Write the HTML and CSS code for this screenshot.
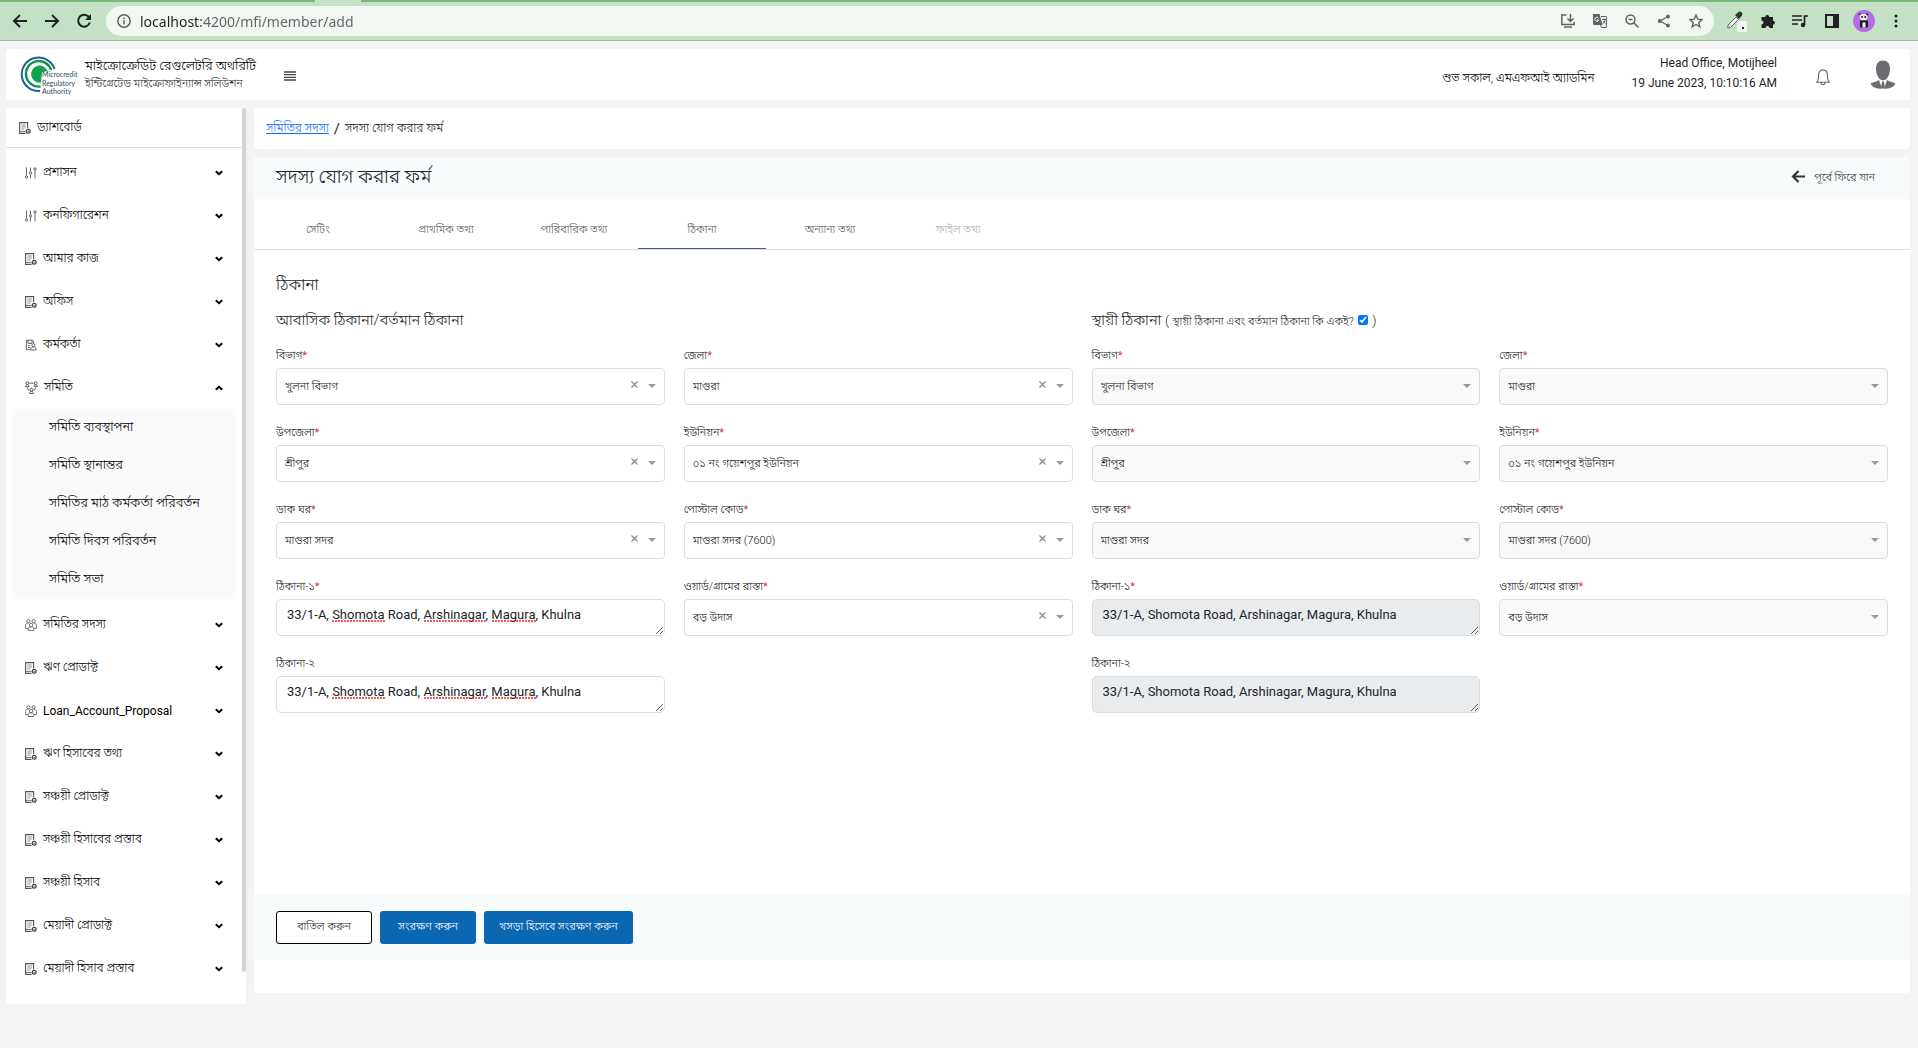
FILE: index.html
```html
<!DOCTYPE html>
<html lang="bn">
<head>
    <meta charset="UTF-8">
    <meta name="viewport" content="width=device-width, initial-scale=1.0">
    <title>সদস্য যোগ করার ফর্ম</title>
    <link rel="stylesheet" href="styles.css">
</head>
<body>
    <!-- icons used more than once -->
    <svg class="sprite" aria-hidden="true">
        <symbol id="i-doc" viewBox="0 0 12 12">
            <path d="M6.500 11.400H.6V.6h8v5.600" fill="none" stroke="#555" stroke-width="1.100"/>
            <path d="M2.400 3h4.400M2.400 5h4.400M2.400 7h3" fill="none" stroke="#777" stroke-width=".8"/>
            <path d="M.6 9.400h6" fill="none" stroke="#555" stroke-width=".8"/>
            <circle cx="9.200" cy="9.300" r="1.900" fill="#fff" stroke="#444" stroke-width="1.200"/>
            <circle cx="9.200" cy="9.300" r=".6" fill="#333"/>
        </symbol>
        <symbol id="i-sliders" viewBox="0 0 12 12">
            <g fill="none" stroke="#555" stroke-width=".9">
                <path d="M1.500 .5v8M5.500 .5v4M5.500 7.500v4M10 3.500v8"/>
                <circle cx="1.500" cy="10" r="1.200"/><circle cx="5.500" cy="6" r="1.200"/><circle cx="10" cy="2" r="1.200"/>
            </g>
        </symbol>
        <symbol id="i-officer" viewBox="0 0 12 12">
            <g fill="none" stroke="#555" stroke-width=".9">
                <path d="M5 10.600H1.400V1.200h6.200l1 1.200v2M3 1.400v3h4v-3M3 6.600h2.200M3 8.500h2"/>
                <circle cx="8.400" cy="6.200" r="1.500"/><path d="M5.800 11V9.600c0-1.200.9-1.700 2.600-1.700s2.700.5 2.700 1.700V11z"/>
            </g>
        </symbol>
        <symbol id="i-network" viewBox="0 0 13 13">
            <g fill="none" stroke="#555" stroke-width=".9">
                <circle cx="2.300" cy="2.200" r="1.400"/><circle cx="10.700" cy="2.200" r="1.400"/><circle cx="6.500" cy="8.800" r="1.500"/>
                <path d="M.6 5.600c0-1.200.7-1.900 1.700-1.900S4 4.400 4 5.600zM9 5.600c0-1.200.7-1.900 1.700-1.900s1.700.7 1.700 1.900zM4.600 12.500c0-1.500.7-2.200 1.900-2.200s1.900.7 1.900 2.200zM4.300 2.200h4.400M2 6.400l2 3.200M11 6.400l-2 3.200"/>
            </g>
        </symbol>
        <symbol id="i-people" viewBox="0 0 12 12">
            <g fill="none" stroke="#666" stroke-width=".9">
                <circle cx="3.400" cy="2.200" r="1.600"/><circle cx="8.600" cy="2.200" r="1.600"/><circle cx="6" cy="6" r="1.700"/>
                <path d="M3 9.600H.6V6.500C.6 5 1.500 4.200 3.600 4.200M9 9.600h2.400V6.500c0-1.500-.9-2.300-3-2.300M3.200 11.500V9.700c0-1.300 1-1.900 2.800-1.900s2.800.6 2.800 1.900v1.800z"/>
            </g>
        </symbol>
        <symbol id="i-chevron" viewBox="0 0 8 6">
            <path d="M.8 1.200L4 4.200l3.200-3" fill="none" stroke="#000" stroke-width="2"/>
        </symbol>
        <symbol id="i-caret" viewBox="0 0 8 4"><path d="M0 0h8L4 4z" fill="#999"/></symbol>
        <symbol id="i-clear" viewBox="0 0 7 7"><path d="M.5.500l6 6M6.500.500l-6 6" stroke="#888" stroke-width="1.200"/></symbol>
        <symbol id="i-spell" viewBox="0 0 205 2">
            <path d="M0 1h53M92 1h63M160 1h45" fill="none" stroke="#f22" stroke-width="1.500" stroke-dasharray="2 1"/>
        </symbol>
    </svg>

    <div class="browser-bar">
        <button class="bar-btn" aria-label="Back"><svg width="16" height="16" viewBox="0 0 16 16"><path d="M15 8H2M8 2L2 8l6 6" fill="none" stroke="#202124" stroke-width="2"/></svg></button>
        <button class="bar-btn" aria-label="Forward"><svg width="16" height="16" viewBox="0 0 16 16"><path d="M1 8h13M8 2l6 6-6 6" fill="none" stroke="#202124" stroke-width="2"/></svg></button>
        <button class="bar-btn" aria-label="Reload"><svg width="16" height="16" viewBox="0 0 16 16"><path d="M13.200 4.400A6 6 0 1 0 13.900 9.500" fill="none" stroke="#202124" stroke-width="2"/><path d="M15 1v6H9z" fill="#202124"/></svg></button>
        <div class="url-bar">
            <svg width="14" height="14" viewBox="0 0 14 14"><circle cx="7" cy="7" r="6.200" fill="none" stroke="#5f6368" stroke-width="1.500"/><path d="M7 6v4.500M7 3.500v1.500" stroke="#5f6368" stroke-width="1.500"/></svg>
            <input type="text" class="url-input" aria-label="Address" value="localhost:4200/mfi/member/add" spellcheck="false">
            <div class="url-icons">
                <svg width="14" height="14" viewBox="0 0 14 14" fill="none" stroke="#5f6368" stroke-width="1.500"><path d="M5.500 1H.8v9.500h12.400V8M3 13h8"/><path d="M9.500 0v7M6.500 4.500l3 3 3-3"/></svg>
                <svg width="14" height="14" viewBox="0 0 14 14"><path d="M0 0h6.500l3 11H1a1 1 0 0 1-1-1z" fill="#5f6368"/><path d="M8 2.500h5.400v11H8.500L7.500 11M9 5.500h4M11 4.500v1M12.200 5.500c-.4 2-1.500 3.500-2.700 4M9.800 7l2.500 2.700" fill="none" stroke="#5f6368"/><path d="M5.600 4.200A2 2 0 1 0 5.800 6H4" fill="none" stroke="#f0f8f1"/></svg>
                <svg width="14" height="14" viewBox="0 0 14 14" fill="none" stroke="#5f6368" stroke-width="1.500"><circle cx="5.500" cy="5.500" r="4.500"/><path d="M9 9l4.500 4.500M3.500 5.500h4"/></svg>
                <svg width="14" height="14" viewBox="0 0 14 14"><path d="M11 2.500L3 7l8 4.500" fill="none" stroke="#5f6368" stroke-width="1.300"/><g fill="#5f6368"><circle cx="11" cy="2.500" r="1.900"/><circle cx="2.700" cy="7" r="1.900"/><circle cx="11" cy="11.500" r="1.900"/></g></svg>
                <svg width="14" height="14" viewBox="0 0 14 14"><path d="M7 1.200l1.800 4 4.300.4-3.300 2.900 1 4.300L7 10.500l-3.800 2.300 1-4.300L.9 5.600l4.300-.4z" fill="none" stroke="#5f6368" stroke-width="1.400"/></svg>
            </div>
        </div>
        <div class="ext-icons">
            <svg width="22" height="22" viewBox="0 0 22 22"><path d="M3 15l8-8 2.500 2.500-8 8-2.700.5z" fill="#eee" stroke="#666"/><path d="M10 5l4 4 3-3.500c1.500-2-1.500-5-3.500-3.500z" fill="#333"/><rect x="12" y="11" width="11" height="11" rx="2" fill="#f1f3f4"/><rect x="17" y="17" width="2" height="2" fill="#202124"/></svg>
            <svg width="22" height="15" viewBox="0 0 15 15"><path d="M1 3h3.700a2 2 0 1 1 4 0H12.500v3.700a2 2 0 1 1 0 4V14H9a2 2 0 0 0-4 0H1v-3.500a2 2 0 0 0 0-4z" fill="#202124"/></svg>
            <svg width="22" height="14" viewBox="0 0 16 14"><path d="M0 2h10M0 6h10M0 10h6M12.500 11V2H16" fill="none" stroke="#202124" stroke-width="1.700"/><circle cx="11" cy="11" r="2.200" fill="#202124"/></svg>
            <svg width="22" height="14" viewBox="0 0 14 14"><path d="M0 0h14v14H0zM2 2v10h6V2z" fill="#202124" fill-rule="evenodd"/></svg>
            <svg width="22" height="22" viewBox="0 0 22 22"><circle cx="11" cy="11" r="11" fill="#b46de0"/><circle cx="7" cy="4.500" r="1.300" fill="#333"/><circle cx="14" cy="4.500" r="1.300" fill="#333"/><rect x="6.500" y="4" width="8" height="6" rx="3" fill="#eee"/><path d="M7 10.500h8v7H7z" fill="#222"/><circle cx="9" cy="7" r="1" fill="#222"/><circle cx="12.200" cy="7" r="1" fill="#222"/><rect x="9.500" y="12.500" width="3" height="5" fill="#eee"/></svg>
            <svg width="22" height="14" viewBox="0 0 4 14" fill="#202124"><circle cx="2" cy="2" r="1.500"/><circle cx="2" cy="7" r="1.500"/><circle cx="2" cy="12" r="1.500"/></svg>
        </div>
    </div>

    <header class="top-header">
        <svg class="logo" width="58" height="44" viewBox="0 0 58 44">
            <path d="M20 38A16.800 16.800 0 1 1 34.500 16" fill="none" stroke="#1c5fa0" stroke-width="2"/>
            <path d="M20.500 33.500A12.800 12.800 0 1 1 31 17" fill="none" stroke="#14904c" stroke-width="2.400"/>
            <path d="M21 29.500A8.500 8.500 0 1 1 27.500 18L22 19z" fill="#0fa24c"/>
            <g font-family="Lato, sans-serif" font-size="7" fill="#2f4a63">
                <text x="22" y="24">Microcredit</text>
                <text x="22" y="33">Regulatory</text>
                <text x="22" y="41">Authority</text>
            </g>
        </svg>
        <div class="brand">
            <div class="brand-name">মাইক্রোক্রেডিট রেগুলেটরি অথরিটি</div>
            <div class="brand-sub">ইন্টিগ্রেটেড মাইক্রোফাইন্যান্স সলিউশন</div>
        </div>
        <button class="menu-btn" aria-label="Menu"><svg width="12" height="10" viewBox="0 0 12 10"><path d="M0 1h12M0 3.700h12M0 6.400h12M0 9h12" stroke="#444" stroke-width="1.300"/></svg></button>
        <div class="greeting">শুভ সকাল, এমএফআই অ্যাডমিন</div>
        <div class="office">
            <div>Head Office, Motijheel</div>
            <div>19 June 2023, 10:10:16 AM</div>
        </div>
        <button class="bell" aria-label="Notifications"><svg width="14" height="17" viewBox="0 0 14 17"><path d="M.8 13.200c1.400-1.200 1.700-2.700 1.700-6.400C2.500 3 4.200.9 7 .9s4.500 2.100 4.500 5.900c0 3.700.3 5.200 1.700 6.400zM5 13.500c0 3 4 3 4 0" fill="none" stroke="#666" stroke-width="1.100"/></svg></button>
        <svg width="26" height="30" viewBox="0 0 26 30" fill="#6b6d70"><path d="M13 .5c4.500 0 7 3 7 8.500 0 5-2.500 9.500-4.500 10.500l-2.500 1-2.500-1C8.500 18.500 6 14 6 9 6 3.500 8.500.5 13 .5z"/><path d="M9 20l3 8.500C7 29.500 2 27 .5 23.500c2-1 6-1.700 8.500-3.500zM17 20l-3 8.500c5 1 10-1.500 11.500-5-2-1-6-1.700-8.500-3.500zM12 21.500h2l.8 6-1.800 1.500-1.800-1.500z"/></svg>
    </header>

    <div class="layout">
        <aside class="sidebar">
            <nav class="side-nav">
                <a href="#" class="dashboard"><svg width="12" height="12"><use href="#i-doc"/></svg>ড্যাশবোর্ড</a>
                <button class="nav-item"><svg width="12" height="12"><use href="#i-sliders"/></svg><span>প্রশাসন</span><svg class="chev" width="8" height="6"><use href="#i-chevron"/></svg></button>
                <button class="nav-item"><svg width="12" height="12"><use href="#i-sliders"/></svg><span>কনফিগারেশন</span><svg class="chev" width="8" height="6"><use href="#i-chevron"/></svg></button>
                <button class="nav-item"><svg width="12" height="12"><use href="#i-doc"/></svg><span>আমার কাজ</span><svg class="chev" width="8" height="6"><use href="#i-chevron"/></svg></button>
                <button class="nav-item"><svg width="12" height="12"><use href="#i-doc"/></svg><span>অফিস</span><svg class="chev" width="8" height="6"><use href="#i-chevron"/></svg></button>
                <button class="nav-item"><svg width="12" height="12"><use href="#i-officer"/></svg><span>কর্মকর্তা</span><svg class="chev" width="8" height="6"><use href="#i-chevron"/></svg></button>
                <button class="nav-item open"><svg width="13" height="13"><use href="#i-network"/></svg><span>সমিতি</span><svg class="chev" width="8" height="6"><use href="#i-chevron"/></svg></button>
                <div class="submenu">
                    <a href="#">সমিতি ব্যবস্থাপনা</a>
                    <a href="#">সমিতি স্থানান্তর</a>
                    <a href="#">সমিতির মাঠ কর্মকর্তা পরিবর্তন</a>
                    <a href="#">সমিতি দিবস পরিবর্তন</a>
                    <a href="#">সমিতি সভা</a>
                </div>
                <button class="nav-item"><svg width="12" height="12"><use href="#i-people"/></svg><span>সমিতির সদস্য</span><svg class="chev" width="8" height="6"><use href="#i-chevron"/></svg></button>
                <button class="nav-item"><svg width="12" height="12"><use href="#i-doc"/></svg><span>ঋণ প্রোডাক্ট</span><svg class="chev" width="8" height="6"><use href="#i-chevron"/></svg></button>
                <button class="nav-item"><svg width="12" height="12"><use href="#i-people"/></svg><span class="latin">Loan_Account_Proposal</span><svg class="chev" width="8" height="6"><use href="#i-chevron"/></svg></button>
                <button class="nav-item"><svg width="12" height="12"><use href="#i-doc"/></svg><span>ঋণ হিসাবের তথ্য</span><svg class="chev" width="8" height="6"><use href="#i-chevron"/></svg></button>
                <button class="nav-item"><svg width="12" height="12"><use href="#i-doc"/></svg><span>সঞ্চয়ী প্রোডাক্ট</span><svg class="chev" width="8" height="6"><use href="#i-chevron"/></svg></button>
                <button class="nav-item"><svg width="12" height="12"><use href="#i-doc"/></svg><span>সঞ্চয়ী হিসাবের প্রস্তাব</span><svg class="chev" width="8" height="6"><use href="#i-chevron"/></svg></button>
                <button class="nav-item"><svg width="12" height="12"><use href="#i-doc"/></svg><span>সঞ্চয়ী হিসাব</span><svg class="chev" width="8" height="6"><use href="#i-chevron"/></svg></button>
                <button class="nav-item"><svg width="12" height="12"><use href="#i-doc"/></svg><span>মেয়াদী প্রোডাক্ট</span><svg class="chev" width="8" height="6"><use href="#i-chevron"/></svg></button>
                <button class="nav-item"><svg width="12" height="12"><use href="#i-doc"/></svg><span>মেয়াদী হিসাব প্রস্তাব</span><svg class="chev" width="8" height="6"><use href="#i-chevron"/></svg></button>
            </nav>
            <div class="scroll-thumb"></div>
        </aside>

        <main class="content">
            <div class="breadcrumb"><a href="#">সমিতির সদস্য</a><span class="slash">/</span><span>সদস্য যোগ করার ফর্ম</span></div>

            <div class="card">
                <div class="card-title">
                    <h1>সদস্য যোগ করার ফর্ম</h1>
                    <a href="#" class="back-link"><svg width="14" height="13" viewBox="0 0 14 13"><path d="M14 6.500H2M7.500 1L2 6.500 7.500 12" fill="none" stroke="#333" stroke-width="2.200"/></svg>পূর্বে ফিরে যান</a>
                </div>
                <div class="tabs">
                    <button class="tab">সেটিং</button>
                    <button class="tab">প্রাথমিক তথ্য</button>
                    <button class="tab">পারিবারিক তথ্য</button>
                    <button class="tab active">ঠিকানা</button>
                    <button class="tab">অন্যান্য তথ্য</button>
                    <button class="tab" disabled>ফাইল তথ্য</button>
                </div>

                <form class="address-form">
                    <h2>ঠিকানা</h2>
                    <div class="address-cols">
                        <section class="address">
                            <h3>আবাসিক ঠিকানা/বর্তমান ঠিকানা</h3>
                            <div class="field">
                                <label for="division">বিভাগ<i>*</i></label>
                                <div class="select"><select id="division"><option>খুলনা বিভাগ</option></select><svg class="clear" width="7" height="7"><use href="#i-clear"/></svg><svg class="caret" width="8" height="4"><use href="#i-caret"/></svg></div>
                            </div>
                            <div class="field">
                                <label for="district">জেলা<i>*</i></label>
                                <div class="select"><select id="district"><option>মাগুরা</option></select><svg class="clear" width="7" height="7"><use href="#i-clear"/></svg><svg class="caret" width="8" height="4"><use href="#i-caret"/></svg></div>
                            </div>
                            <div class="field">
                                <label for="upazila">উপজেলা<i>*</i></label>
                                <div class="select"><select id="upazila"><option>শ্রীপুর</option></select><svg class="clear" width="7" height="7"><use href="#i-clear"/></svg><svg class="caret" width="8" height="4"><use href="#i-caret"/></svg></div>
                            </div>
                            <div class="field">
                                <label for="union">ইউনিয়ন<i>*</i></label>
                                <div class="select"><select id="union"><option>০১ নং গয়েশপুর ইউনিয়ন</option></select><svg class="clear" width="7" height="7"><use href="#i-clear"/></svg><svg class="caret" width="8" height="4"><use href="#i-caret"/></svg></div>
                            </div>
                            <div class="field">
                                <label for="post-office">ডাক ঘর<i>*</i></label>
                                <div class="select"><select id="post-office"><option>মাগুরা সদর</option></select><svg class="clear" width="7" height="7"><use href="#i-clear"/></svg><svg class="caret" width="8" height="4"><use href="#i-caret"/></svg></div>
                            </div>
                            <div class="field">
                                <label for="post-code">পোস্টাল কোড<i>*</i></label>
                                <div class="select"><select id="post-code"><option>মাগুরা সদর (7600)</option></select><svg class="clear" width="7" height="7"><use href="#i-clear"/></svg><svg class="caret" width="8" height="4"><use href="#i-caret"/></svg></div>
                            </div>
                            <div class="field">
                                <label for="address1">ঠিকানা-১<i>*</i></label>
                                <div class="text"><textarea id="address1" rows="1">33/1-A, Shomota Road, Arshinagar, Magura, Khulna</textarea><svg class="spell" width="205" height="2"><use href="#i-spell"/></svg></div>
                            </div>
                            <div class="field">
                                <label for="ward">ওয়ার্ড/গ্রামের রাস্তা<i>*</i></label>
                                <div class="select"><select id="ward"><option>বড় উদাস</option></select><svg class="clear" width="7" height="7"><use href="#i-clear"/></svg><svg class="caret" width="8" height="4"><use href="#i-caret"/></svg></div>
                            </div>
                            <div class="field">
                                <label for="address2">ঠিকানা-২</label>
                                <div class="text"><textarea id="address2" rows="1">33/1-A, Shomota Road, Arshinagar, Magura, Khulna</textarea><svg class="spell" width="205" height="2"><use href="#i-spell"/></svg></div>
                            </div>
                        </section>

                        <section class="address">
                            <h3>স্থায়ী ঠিকানা <small>( <label for="same">স্থায়ী ঠিকানা এবং বর্তমান ঠিকানা কি একই?</label> <input type="checkbox" id="same" checked> )</small></h3>
                            <div class="field">
                                <label for="p-division">বিভাগ<i>*</i></label>
                                <div class="select"><select id="p-division" disabled><option>খুলনা বিভাগ</option></select><svg class="caret" width="8" height="4"><use href="#i-caret"/></svg></div>
                            </div>
                            <div class="field">
                                <label for="p-district">জেলা<i>*</i></label>
                                <div class="select"><select id="p-district" disabled><option>মাগুরা</option></select><svg class="caret" width="8" height="4"><use href="#i-caret"/></svg></div>
                            </div>
                            <div class="field">
                                <label for="p-upazila">উপজেলা<i>*</i></label>
                                <div class="select"><select id="p-upazila" disabled><option>শ্রীপুর</option></select><svg class="caret" width="8" height="4"><use href="#i-caret"/></svg></div>
                            </div>
                            <div class="field">
                                <label for="p-union">ইউনিয়ন<i>*</i></label>
                                <div class="select"><select id="p-union" disabled><option>০১ নং গয়েশপুর ইউনিয়ন</option></select><svg class="caret" width="8" height="4"><use href="#i-caret"/></svg></div>
                            </div>
                            <div class="field">
                                <label for="p-post-office">ডাক ঘর<i>*</i></label>
                                <div class="select"><select id="p-post-office" disabled><option>মাগুরা সদর</option></select><svg class="caret" width="8" height="4"><use href="#i-caret"/></svg></div>
                            </div>
                            <div class="field">
                                <label for="p-post-code">পোস্টাল কোড<i>*</i></label>
                                <div class="select"><select id="p-post-code" disabled><option>মাগুরা সদর (7600)</option></select><svg class="caret" width="8" height="4"><use href="#i-caret"/></svg></div>
                            </div>
                            <div class="field">
                                <label for="p-address1">ঠিকানা-১<i>*</i></label>
                                <div class="text"><textarea id="p-address1" rows="1" disabled>33/1-A, Shomota Road, Arshinagar, Magura, Khulna</textarea></div>
                            </div>
                            <div class="field">
                                <label for="p-ward">ওয়ার্ড/গ্রামের রাস্তা<i>*</i></label>
                                <div class="select"><select id="p-ward" disabled><option>বড় উদাস</option></select><svg class="caret" width="8" height="4"><use href="#i-caret"/></svg></div>
                            </div>
                            <div class="field">
                                <label for="p-address2">ঠিকানা-২</label>
                                <div class="text"><textarea id="p-address2" rows="1" disabled>33/1-A, Shomota Road, Arshinagar, Magura, Khulna</textarea></div>
                            </div>
                        </section>
                    </div>
                </form>

                <div class="card-footer">
                    <button class="btn btn-outline">বাতিল করুন</button>
                    <button class="btn btn-primary">সংরক্ষণ করুন</button>
                    <button class="btn btn-primary">খসড়া হিসেবে সংরক্ষণ করুন</button>
                </div>
            </div>
        </main>
    </div>
</body>
</html>
```

FILE: styles.css
```css
*{
    box-sizing: border-box;
}
body{
    margin: 0;
    min-height: 100vh;
    background-color: #f4f4f4;
    font-family: Roboto, "Noto Sans Bengali", "Noto Sans", sans-serif;
    font-size: 12px;
    color: #212529;
}
button,
select,
textarea,
input{
    font-family: inherit;
    font-size: inherit;
    font-weight: inherit;
    color: inherit;
}
button{
    border: none;
    background: none;
    padding: 0;
}
h1, h2, h3{
    margin: 0;
    font-weight: 300;
}
svg{
    flex-shrink: 0;
}
.sprite{
    position: absolute;
    width: 0;
    height: 0;
}

/* browser bar */
.browser-bar{
    display: flex;
    align-items: center;
    height: 41px;
    padding: 2px 11px 0 12px;
    background-color: #c5e1c5;
    border-bottom: 1px solid #9fb59f;
    background-image: linear-gradient(90deg, #76ba7a 315px, #c5e1c5 315px, #c5e1c5 361px, #76ba7a 361px);
    background-size: 100% 2px;
    background-repeat: no-repeat;
}
.bar-btn{
    display: flex;
    margin-right: 16px;
}
.url-bar{
    flex: 1;
    display: flex;
    align-items: center;
    height: 30px;
    margin-left: -2px;
    padding: 0 11px;
    border-radius: 15px;
    background-color: #f0f8f1;
}
.url-input{
    flex: 1;
    margin-left: 9px;
    padding: 0;
    border: none;
    outline: none;
    font-family: "Noto Sans", sans-serif;
    font-size: 14px;
    font-weight: 400;
    color: #5f6368;
    background: linear-gradient(90deg, #202124 61px, #5f6368 61px);
    -webkit-background-clip: text;
    background-clip: text;
    -webkit-text-fill-color: transparent;
}
.url-icons{
    display: flex;
    gap: 18px;
}
.ext-icons{
    display: flex;
    align-items: center;
    gap: 10px;
    margin-left: 11px;
}

/* header */
.top-header{
    display: flex;
    align-items: center;
    height: 51px;
    margin: 8px 8px 8px 6px;
    padding: 0 14px;
    border-radius: 4px;
    background-color: #fff;
}
.brand{
    margin-left: 7px;
    font-weight: 300;
}
.brand-name{
    font-size: 13px;
    line-height: 18px;
    color: #000;
}
.brand-sub{
    font-size: 11px;
    line-height: 18px;
}
.menu-btn{
    margin-left: 28px;
    padding-top: 4px;
}
.greeting{
    margin-left: auto;
    padding-top: 8px;
    font-weight: 300;
    color: #000;
}
.office{
    margin: 0 39px 0 37px;
    padding-bottom: 4px;
    line-height: 20px;
    text-align: right;
}
.bell{
    margin-right: 40px;
    padding-top: 8px;
}

/* sidebar */
.layout{
    display: flex;
    align-items: flex-start;
    gap: 8px;
    margin: 0 8px 0 6px;
}
.sidebar{
    display: flex;
    flex: 0 0 240px;
    min-height: calc(100vh - 152px);
    border-radius: 4px;
    background-color: #fff;
    font-weight: 300;
}
.side-nav{
    flex: 1;
}
.scroll-thumb{
    width: 4px;
    margin-bottom: 32px;
    border-radius: 2px;
    background-color: #d4d4d4;
}
.dashboard{
    display: flex;
    align-items: center;
    gap: 6px;
    height: 40px;
    margin-bottom: 3px;
    padding-left: 13px;
    border-bottom: 1px solid #ddd;
    color: #000;
    text-decoration: none;
}
.nav-item{
    display: flex;
    align-items: center;
    gap: 6px;
    width: 100%;
    height: 43px;
    padding: 0 19px;
    color: #000;
    text-align: left;
}
.latin{
    font-weight: 400;
}
.chev{
    margin-left: auto;
}
.open .chev{
    transform: rotate(180deg);
}
.submenu{
    margin: 0 6px 4px;
    border-radius: 4px;
    background-color: #fafafa;
    font-size: 13px;
}
.submenu a{
    display: flex;
    align-items: center;
    height: 38px;
    padding: 0 0 2px 37px;
    color: #000;
    text-decoration: none;
}

/* content */
.content{
    flex: 1;
    min-width: 0;
    font-weight: 300;
}
.breadcrumb{
    display: flex;
    align-items: center;
    height: 41px;
    margin-bottom: 8px;
    padding: 0 12px;
    border-radius: 4px;
    background-color: #fff;
}
.breadcrumb a{
    color: #0d6efd;
}
.slash{
    margin: 0 5px;
    font-size: 15px;
    font-weight: 400;
}
.card{
    display: flex;
    flex-direction: column;
    min-height: calc(100vh - 212px);
    padding-bottom: 33px;
    border-radius: 4px;
    background-color: #fff;
}
.card-title{
    display: flex;
    align-items: center;
    justify-content: space-between;
    height: 42px;
    padding: 0 35px 0 22px;
    background-color: #f7fbfc;
}
.card-title h1{
    font-size: 19px;
}
.back-link{
    display: flex;
    align-items: center;
    gap: 9px;
    font-size: 11px;
    color: #333;
    text-decoration: none;
}
.back-link svg{
    margin-bottom: 4px;
}
.tabs{
    display: flex;
    height: 51px;
    border-bottom: 1px solid #ddd;
}
.tab{
    width: 128px;
    height: 50px;
    padding-top: 12px;
    font-size: 11px;
    color: #555;
}
.tab.active{
    border-bottom: 1px solid #3f51b5;
}
.tab:disabled{
    color: #aaa;
}

/* form */
.address-form{
    flex: 1;
    padding: 23px 22px;
}
.address-form h2{
    font-size: 16px;
    line-height: 24px;
}
.address-cols{
    display: grid;
    grid-template-columns: 1fr 1fr;
    gap: 19px;
    margin-top: 14px;
}
.address{
    display: grid;
    grid-template-columns: 1fr 1fr;
    gap: 19px;
    align-content: start;
}
.address h3{
    grid-column: 1 / 3;
    height: 18px;
    margin-bottom: -1px;
    font-size: 15px;
    line-height: 18px;
}
.address small{
    font-size: 13px;
}
.address small label{
    font-size: 11px;
}
.address small input{
    width: 10px;
    height: 10px;
    margin: 0 1px;
}
.field label{
    display: block;
    margin-bottom: 4px;
    font-size: 11px;
    line-height: 17px;
    color: #111;
}
.field i{
    color: #dc3545;
    font-style: normal;
    font-weight: 400;
}
.select,
.text{
    position: relative;
    height: 37px;
}
.select select{
    width: 100%;
    height: 37px;
    padding: 0 8px;
    border: 1px solid #ddd;
    border-radius: 4px;
    background-color: #fff;
    font-size: 11px;
    color: #111;
    appearance: none;
}
.select select:disabled{
    background-color: #f9f9f9;
    opacity: 1;
}
.caret{
    position: absolute;
    right: 9px;
    top: 16px;
}
.clear{
    position: absolute;
    right: 27px;
    top: 13px;
}
.text textarea{
    display: block;
    width: 100%;
    height: 37px;
    padding: 5px 10px;
    border: 1px solid #ddd;
    border-radius: 5px;
    background-color: #fff;
    font-size: 13px;
    font-weight: 400;
    line-height: 20px;
    overflow: hidden;
}
.text textarea:disabled{
    background-color: #e9ecef;
    color: #212529;
}
.spell{
    position: absolute;
    left: 56px;
    top: 21px;
}

.card-footer{
    display: flex;
    align-items: center;
    gap: 8px;
    height: 66px;
    padding: 0 22px;
    background-color: #f7fbfc;
}
.btn{
    min-width: 96px;
    height: 33px;
    padding: 0 15px;
    border-radius: 3px;
    font-size: 11px;
}
.btn-outline{
    border: 1px solid #000;
    background-color: #fff;
}
.btn-primary{
    background-color: #0b67b2;
    color: #fff;
}
```
